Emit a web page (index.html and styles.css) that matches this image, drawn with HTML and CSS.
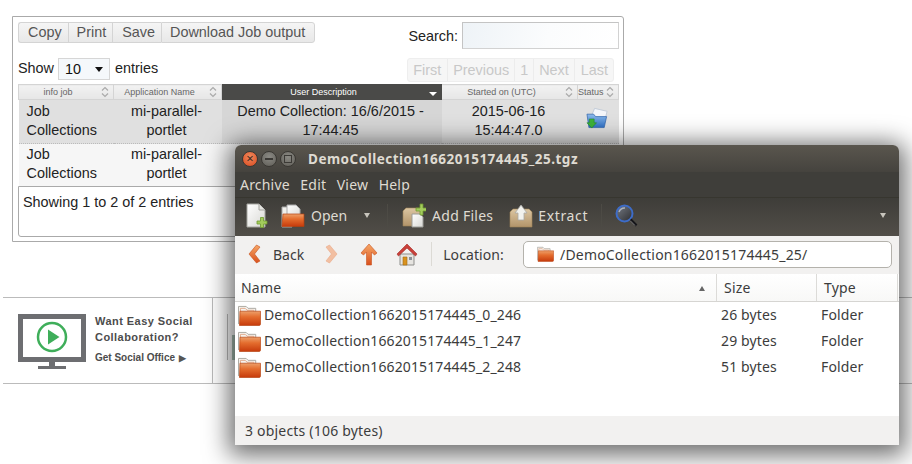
FILE: index.html
```html
<!DOCTYPE html>
<html lang="en">
<head>
<meta charset="utf-8">
<title>Job output</title>
<link rel="stylesheet" href="styles.css">
</head>
<body>
<svg class="defs" width="0" height="0" aria-hidden="true">
  <defs>
    <linearGradient id="gOrange" x1="0" y1="0" x2="0" y2="1">
      <stop offset="0" stop-color="#eda06a"/><stop offset=".4" stop-color="#e46d2e"/><stop offset="1" stop-color="#c63a0b"/>
    </linearGradient>
    <linearGradient id="gBox" x1="0" y1="0" x2="0" y2="1">
      <stop offset="0" stop-color="#dcc6a2"/><stop offset="1" stop-color="#b2946a"/>
    </linearGradient>
    <linearGradient id="gPaper" x1="0" y1="0" x2="1" y2="1">
      <stop offset="0" stop-color="#ffffff"/><stop offset="1" stop-color="#d8d8d4"/>
    </linearGradient>
    <linearGradient id="gBlue" x1="0" y1="0" x2="0" y2="1">
      <stop offset="0" stop-color="#8dbcec"/><stop offset="1" stop-color="#2f6fc4"/>
    </linearGradient>
    <linearGradient id="gArrow" x1="0" y1="0" x2="0" y2="1">
      <stop offset="0" stop-color="#f6a868"/><stop offset="1" stop-color="#d9501c"/>
    </linearGradient>
    <linearGradient id="gGlass" x1="0" y1="0" x2="1" y2="1">
      <stop offset="0" stop-color="#767b84"/><stop offset="1" stop-color="#2b2c30"/>
    </linearGradient>
    <symbol id="folder" viewBox="0 0 24 22">
      <path d="M.5 20V1.500h8l2 2h8V8" fill="#f6f4f0" stroke="#aaa7a0"/>
      <path d="M2.500 20V3.500h5l2 2h7V8" fill="none" stroke="#e2a888"/>
      <path d="M2 6.500h21.500V20a1.500 1.500 0 0 1-1.500 1.500H1.500z" fill="url(#gOrange)" stroke="#b5400f" stroke-width=".7"/>
    </symbol>
  </defs>
</svg>
<div class="page">
  <section class="panel">
    <div class="top-row">
      <div class="btn-group">
        <button class="btn">Copy</button><button class="btn">Print</button><button class="btn btn-save">Save</button><button class="btn">Download Job output</button>
      </div>
      <label class="search">Search:<span class="search-input"></span></label>
    </div>
    <div class="second-row">
      <div class="length">Show <span class="select">10<i class="select-arrow"></i></span> entries</div>
      <div class="pager">
        <span class="pg pg-first">First</span><span class="pg pg-prev">Previous</span><span class="pg pg-num">1</span><span class="pg pg-next">Next</span><span class="pg pg-last">Last</span>
      </div>
    </div>
    <table class="jobs">
      <colgroup>
        <col class="c1"><col class="c2"><col class="c3"><col class="c4"><col class="c5">
      </colgroup>
      <thead>
        <tr>
          <th><span class="th-in">info job<svg class="sort" viewBox="0 0 8 12"><path d="M1 4.500 4 1.500 7 4.500M1 7.500 4 10.500 7 7.500" fill="none" stroke="#aaa" stroke-width="1.200"/></svg></span></th>
          <th><span class="th-in">Application Name<svg class="sort" viewBox="0 0 8 12"><path d="M1 4.500 4 1.500 7 4.500M1 7.500 4 10.500 7 7.500" fill="none" stroke="#aaa" stroke-width="1.200"/></svg></span></th>
          <th class="sorted"><span class="th-in">User Description<svg class="sort" viewBox="0 0 8 12"><path d="M0 6h8L4 10z" fill="#fff"/></svg></span></th>
          <th><span class="th-in">Started on (UTC)<svg class="sort" viewBox="0 0 8 12"><path d="M1 4.500 4 1.500 7 4.500M1 7.500 4 10.500 7 7.500" fill="none" stroke="#aaa" stroke-width="1.200"/></svg></span></th>
          <th class="th-status"><span class="th-in">Status<svg class="sort" viewBox="0 0 8 12"><path d="M1 4.500 4 1.500 7 4.500M1 7.500 4 10.500 7 7.500" fill="none" stroke="#aaa" stroke-width="1.200"/></svg></span></th>
        </tr>
      </thead>
      <tbody>
        <tr class="row-a">
          <td class="left">Job Collections</td>
          <td>mi-parallel-portlet</td>
          <td class="col-sorted">Demo Collection: 16/6/2015 - 17:44:45</td>
          <td>2015-06-16 15:44:47.0</td>
          <td><svg class="status-icon" viewBox="1 0 24 22"><path d="M7 8 10 1l13 3-3 12z" fill="#f4f6fa" stroke="#b8c4d4" stroke-width=".8"/><path d="M2 7h7l2 2.500h11.500L20 21H4z" fill="url(#gBlue)" stroke="#2a5ea8" stroke-width=".7"/><path d="M4.500 12h5v4H12l-5 5.500L2 16h2.500z" fill="#3db23a" stroke="#1f8a2a" stroke-width=".6"/></svg></td>
        </tr>
        <tr class="row-b">
          <td class="left">Job Collections</td>
          <td>mi-parallel-portlet</td>
          <td></td>
          <td></td>
          <td></td>
        </tr>
      </tbody>
    </table>
    <div class="info">Showing 1 to 2 of 2 entries</div>
  </section>

  <aside class="promo">
    <div class="promo-main">
      <svg class="monitor" viewBox="0 0 68 55">
        <rect x="2.500" y="2.500" width="63" height="43" fill="#fff" stroke="#6d6e71" stroke-width="5"/>
        <rect x="0" y="43" width="68" height="4" fill="#6d6e71"/>
        <rect x="31" y="47" width="6" height="6" fill="#6d6e71"/>
        <rect x="20" y="52" width="28" height="3" fill="#6d6e71"/>
        <circle cx="34" cy="23" r="14" fill="none" stroke="#3fae5a" stroke-width="2.500"/>
        <path d="M30 15.500 41.500 23 30 30.500z" fill="#3fae5a"/>
      </svg>
      <div class="promo-text">
        <p class="promo-title">Want Easy Social<br>Collaboration?</p>
        <p class="promo-link">Get Social Office <span class="promo-play">&#9654;</span></p>
      </div>
    </div>
    <div class="promo-side"><span class="promo-rule"></span><span class="promo-tick"></span></div>
  </aside>

  <div class="window">
    <header class="titlebar">
      <span class="wbtn wbtn-close">&#215;</span>
      <span class="wbtn wbtn-min"><i class="glyph-min"></i></span>
      <span class="wbtn wbtn-max"><i class="glyph-max"></i></span>
      <span class="wtitle">DemoCollection1662015174445_25.tgz</span>
    </header>
    <nav class="menubar"><span>Archive</span><span>Edit</span><span>View</span><span>Help</span></nav>
    <div class="toolbar">
      <svg class="ti ti-new" viewBox="0 0 22 26"><path d="M1 1h12l6 6v17H1z" fill="url(#gPaper)" stroke="#a5a5a0"/><path d="M13 1v6h6" fill="#e4e4e0" stroke="#a5a5a0"/><path d="M11 18h3.500v-3.500h3V18H21v3h-3.500v3.500h-3V21H11z" fill="#a3cc5c" stroke="#6e9a30" stroke-width=".8"/></svg>
      <svg class="ti ti-open" viewBox="0 0 24 24"><path d="M1 3h10v20H1z" fill="#f1f0ec" stroke="#aaa"/><path d="M6 1h9l4 4v10H6z" fill="url(#gPaper)" stroke="#aaa"/><path d="M2 10h21v12.500H1z" fill="url(#gOrange)" stroke="#b5400f" stroke-width=".7"/></svg>
      <span class="tl tl-open">Open</span>
      <i class="tri tri-open"></i>
      <i class="tsep tsep-a"></i>
      <svg class="ti ti-add" viewBox="0 0 24 25"><path d="M1 8 4 5h14l2 3v15H1z" fill="url(#gBox)" stroke="#a08458" stroke-width=".6"/><path d="M10 11h8l3 3v10H10z" fill="url(#gPaper)" stroke="#9c9c98"/><path d="M14 5h4V1h3v4h3.500v3H21v4h-3V8h-4z" fill="#a3cc5c" stroke="#6e9a30" stroke-width=".8"/></svg>
      <span class="tl tl-add">Add Files</span>
      <svg class="ti ti-ext" viewBox="0 0 24 24"><path d="M1 8 4 5h16l3 3v15H1z" fill="url(#gBox)" stroke="#a08458" stroke-width=".6"/><path d="M9 16V9H6l6-8 6 8h-3v7z" fill="#f2f2ee" stroke="#a8a8a4" stroke-width=".8"/></svg>
      <span class="tl tl-ext">Extract</span>
      <i class="tsep tsep-b"></i>
      <svg class="ti ti-find" viewBox="0 0 23 23"><circle cx="9.500" cy="9.500" r="8" fill="url(#gGlass)" stroke="#3d6cc8" stroke-width="2"/><path d="M4 8a6 6 0 0 1 6-4" fill="none" stroke="#aab2c0" stroke-width="1.500"/><path d="m15.500 15.500 6 6" stroke="#16161a" stroke-width="2.500"/><path d="m15 16.500 5 5" stroke="#bdbdbd" stroke-width=".6"/></svg>
      <i class="tri tri-more"></i>
    </div>
    <div class="navbar">
      <svg class="ni ni-back" viewBox="0 0 14 20"><path d="M9.500 1 2 10l7.500 9 3.500-2-5.500-7L13 3z" fill="url(#gArrow)" stroke="#c8521e" stroke-width=".6"/></svg>
      <span class="nl nl-back">Back</span>
      <svg class="ni ni-fwd" viewBox="0 0 14 20"><path d="M4.500 1 12 10l-7.500 9L1 17l5.500-7L1 3z" fill="#f2bfa2" stroke="#eaa988" stroke-width=".6"/></svg>
      <svg class="ni ni-up" viewBox="0 0 18 23"><path d="M9 1 1 10l2.500 2L6.500 9v13h5V9l3 3 2.500-2z" fill="url(#gArrow)" stroke="#c8521e" stroke-width=".6"/></svg>
      <svg class="ni ni-home" viewBox="0 0 22 23"><path d="M4 11h14v11H4z" fill="#e6e4e0" stroke="#8f8f8c"/><path d="M7 14h4v8H7z" fill="#d9921e" stroke="#a56c10" stroke-width=".6"/><path d="M13 14h3v3h-3z" fill="#8a9097"/><path d="M11 1 1 11l1.500 2L11 5l8.500 8 1.500-2z" fill="#c9403a" stroke="#a32a26" stroke-width=".6"/></svg>
      <i class="nsep"></i>
      <span class="nl nl-loc">Location:</span>
      <div class="locfield">
        <svg class="loc-folder"><use href="#folder"/></svg>
        <span class="loc-text">/DemoCollection1662015174445_25/</span>
      </div>
    </div>
    <div class="list-head">
      <span class="lh lh-name">Name<i class="sort-up"></i></span>
      <span class="lh lh-size">Size</span>
      <span class="lh lh-type">Type</span>
    </div>
    <div class="list">
      <div class="item"><span class="item-name"><svg class="item-folder"><use href="#folder"/></svg>DemoCollection1662015174445_0_246</span><span class="item-size">26 bytes</span><span class="item-type">Folder</span></div>
      <div class="item"><span class="item-name"><svg class="item-folder"><use href="#folder"/></svg>DemoCollection1662015174445_1_247</span><span class="item-size">29 bytes</span><span class="item-type">Folder</span></div>
      <div class="item"><span class="item-name"><svg class="item-folder"><use href="#folder"/></svg>DemoCollection1662015174445_2_248</span><span class="item-size">51 bytes</span><span class="item-type">Folder</span></div>
    </div>
    <footer class="status">3 objects (106 bytes)</footer>
  </div>
</div>
</body>
</html>
```

FILE: styles.css
```css
* { box-sizing: border-box; }
html, body { margin: 0; padding: 0; background: #fff; }
.defs { position: absolute; }
.page {
  position: relative;
  width: 912px;
  height: 464px;
  overflow: hidden;
  padding-top: 16px;
  font-family: "Liberation Sans", Arial, sans-serif;
  font-size: 14.4px;
  color: #222;
}

/* page panel */
.panel {
  width: 612px;
  height: 226px;
  margin-left: 12px;
  padding: 5px;
  border: 1px solid #aaa;
  border-top-right-radius: 3px;
}
.top-row, .second-row { display: flex; justify-content: space-between; }
.top-row { height: 27px; }
.second-row { margin-top: 9px; height: 24px; }

.btn-group { display: flex; height: 21px; }
.btn {
  height: 21px;
  padding: 0 6px 0 8px;
  font: 14.4px/19px "Liberation Sans", Arial, sans-serif;
  color: #555;
  background: linear-gradient(#f5f5f5, #e8e8e8);
  border: 1px solid #d4d4d4;
  border-right-width: 0;
}
.btn:first-child { padding-left: 9px; border-radius: 3px 0 0 3px; }
.btn:last-child { padding-right: 9px; border-right-width: 1px; border-radius: 0 3px 3px 0; }
.btn-save { padding-left: 9px; }

.search { display: flex; align-items: center; gap: 4px; height: 27px; margin-right: -1px; color: #222; }
.search-input {
  width: 157px;
  height: 27px;
  border: 1px solid #d2d2d2;
  border-top-color: #c4c4c4;
  border-left-color: #c4c4c4;
  background: linear-gradient(100deg, #eef3f7, #fbfcfd 55%, #fff);
}

.length { display: flex; align-items: flex-start; gap: 4px; height: 22px; line-height: 20px; }
.select {
  position: relative;
  display: block;
  width: 52px;
  height: 22px;
  margin-right: 1px;
  padding-left: 6px;
  line-height: 21px;
  border: 1px solid #d6d6d6;
  background: #f5f8fb;
  color: #111;
}
.select-arrow {
  position: absolute;
  right: 6px;
  top: 8px;
  border: 4px solid transparent;
  border-top: 5px solid #111;
  border-bottom: 0;
}
.pager {
  display: flex;
  height: 24px;
  margin-right: 4px;
  border: 1px solid #eee;
  border-radius: 3px;
  background: #f6f6f6;
  color: #c8c8c8;
  line-height: 22px;
}
.pg { padding: 0 5px; border-left: 1px solid #ececec; }
.pg-first { padding-right: 6px; border-left: 0; }
.pg-last { padding-left: 6px; }

/* table */
.jobs { width: 600px; margin-top: 2px; border-collapse: collapse; table-layout: fixed; }
.c1 { width: 95px; }
.c2 { width: 108px; }
.c3 { width: 220px; }
.c4 { width: 136px; }
.c5 { width: 41px; }
.jobs th {
  position: relative;
  height: 15px;
  padding: 0 16px 0 0;
  font-weight: normal;
  font-size: 9px;
  line-height: 13px;
  color: #666;
  background: linear-gradient(#f2f2f2, #e6e6e6);
  border: 1px solid #d4d4d4;
  border-width: 1px 1px 1px 0;
}
.jobs th:first-child { border-left: 1px solid #d4d4d4; }
.th-in { display: block; }
.jobs th.sorted { background: #4a4a48; color: #fff; border-color: #4a4a48; }
.sort { position: absolute; right: 4px; top: 1px; width: 8px; height: 12px; }
.jobs th.th-status { text-align: left; padding: 0; }
.jobs td {
  padding: 0 2px 2px 0;
  text-align: center;
  vertical-align: middle;
  font-size: 14.4px;
  line-height: 19px;
  color: #222;
}
.jobs td.left { text-align: left; padding: 0 8px 2px; }
.row-a td { height: 44px; background: #e0e0e0; }
.row-a td.col-sorted { background: #d6d6d6; }
.row-b td { height: 42px; background: #f6f6f6; border-top: 1px dotted #bbb; }
.status-icon { display: block; width: 23px; height: 22px; margin: -6px auto 0; }

.info {
  width: 600px;
  height: 51px;
  padding: 6px 4px;
  border: 1px solid #aaa;
  border-bottom-left-radius: 3px;
  border-bottom-right-radius: 3px;
  line-height: 18px;
}

/* promo strip */
.promo {
  display: flex;
  width: 909px;
  height: 87px;
  margin: 55px 0 0 3px;
  border-top: 1px solid #bbb;
  border-bottom: 1px solid #bbb;
}
.promo-main {
  display: flex;
  width: 210px;
  padding: 16px 0 0 15px;
  border-right: 1px solid #bbb;
  gap: 9px;
}
.monitor { display: block; width: 68px; height: 55px; flex: none; }
.promo-text { margin-top: -1px; font-weight: bold; color: #4c4c4c; font-size: 11px; letter-spacing: .45px; }
.promo-title { margin: 0; line-height: 16px; }
.promo-link { margin: 6px 0 0; line-height: 14px; font-size: 10px; letter-spacing: 0; white-space: nowrap; }
.promo-play { margin-left: 1px; font-size: 9px; color: #555; }
.promo-side { position: relative; display: flex; padding: 16px 0 0 14px; gap: 4px; }
.promo-rule { display: block; width: 1px; height: 46px; background: #bbb; }
.promo-tick { display: block; width: 3px; height: 25px; margin-top: 21px; background: #a9c0b4; }

/* floating window */
.window {
  position: absolute;
  left: 235px;
  top: 145px;
  width: 664px;
  height: 300px;
  display: flex;
  flex-direction: column;
  border-radius: 6px 6px 0 0;
  box-shadow: 0 4px 24px 6px rgba(0, 0, 0, .58);
  font-family: "Noto Sans", sans-serif;
  font-size: 14px;
  color: #3c3c3c;
  background: #f2f1f0;
}
.titlebar {
  display: flex;
  align-items: center;
  height: 27px;
  flex: none;
  padding-left: 7px;
  gap: 3px;
  background: linear-gradient(#5a564e, #45433e);
  border-radius: 6px 6px 0 0;
}
.wbtn {
  display: flex;
  align-items: center;
  justify-content: center;
  width: 16px;
  height: 16px;
  border-radius: 50%;
  background: radial-gradient(circle at 50% 35%, #8b8a84, #5f5d57);
  border: 1px solid #3a3833;
  color: #3a2a20;
}
.wbtn-close { background: radial-gradient(circle at 50% 35%, #f08a5d, #d8491f); font-size: 13px; line-height: 1; }
.glyph-min { display: block; width: 8px; height: 2px; background: #3c3a36; }
.glyph-max { display: block; width: 8px; height: 8px; border: 1px solid #3c3a36; }
.wtitle {
  margin-left: 9px;
  font-weight: bold;
  font-size: 13.5px;
  letter-spacing: .5px;
  color: #dfdbd2;
  white-space: nowrap;
}
.menubar {
  display: flex;
  align-items: center;
  height: 25px;
  flex: none;
  padding-left: 5px;
  gap: 10.500px;
  letter-spacing: .2px;
  color: #dfdbd2;
  background: #3f3e3a;
}
.toolbar {
  display: flex;
  align-items: center;
  height: 39px;
  flex: none;
  padding: 0 0 3px 11px;
  color: #dfdbd2;
  background: linear-gradient(#3e3d39, #514e48);
  border-top: 1px solid #37362f;
}
.ti { display: block; flex: none; }
.ti-new { width: 22px; height: 26px; }
.ti-open { width: 24px; height: 24px; margin-left: 13px; }
.tl { white-space: nowrap; }
.tl-open { margin-left: 6px; }
.tri { display: block; border: 3.500px solid transparent; border-top: 5px solid #c8c5bd; border-bottom: 0; }
.tri-open { margin-left: 17px; }
.tsep { display: block; width: 1px; height: 24px; background: #4d4b45; }
.tsep-a { margin-left: 17px; }
.ti-add { width: 24px; height: 25px; margin-left: 14px; }
.tl-add { margin-left: 6px; letter-spacing: .25px; }
.ti-ext { width: 24px; height: 24px; margin-left: 16px; }
.tl-ext { margin-left: 5px; letter-spacing: .65px; }
.tsep-b { margin-left: 13px; }
.ti-find { width: 23px; height: 23px; margin-left: 13px; }
.tri-more { margin-left: auto; margin-right: 13px; }
.navbar {
  display: flex;
  align-items: center;
  height: 38px;
  flex: none;
  padding: 0 0 2px 12px;
  background: #f2f1f0;
}
.ni { display: block; flex: none; }
.ni-back { width: 14px; height: 20px; }
.nl { color: #3c3c3c; white-space: nowrap; }
.nl-back { margin-left: 12px; }
.ni-fwd { width: 14px; height: 20px; margin-left: 21px; }
.ni-up { width: 18px; height: 23px; margin-left: 21px; }
.ni-home { width: 22px; height: 23px; margin-left: 18px; }
.nsep { display: block; width: 1px; height: 24px; margin-left: 13px; background: #dcdad5; }
.nl-loc { margin-left: 11px; letter-spacing: .1px; }
.locfield {
  display: flex;
  align-items: center;
  width: 369px;
  height: 27px;
  margin-left: 19px;
  padding-left: 13px;
  gap: 6px;
  background: #fff;
  border: 1px solid #b4b2ac;
  border-radius: 5px;
  white-space: nowrap;
  letter-spacing: .19px;
}
.loc-folder { display: block; width: 17px; height: 16px; flex: none; }
.list-head {
  display: grid;
  grid-template-columns: 482px 100px 81px;
  height: 28px;
  flex: none;
  letter-spacing: .2px;
  background: linear-gradient(#fff, #f8f8f7);
  border-bottom: 1px solid #d6d5d2;
}
.lh { position: relative; display: flex; align-items: center; padding-left: 7px; border-right: 1px solid #dcdbd8; }
.lh-name { padding-left: 6px; }
.sort-up {
  position: absolute;
  right: 11px;
  top: 12px;
  border: 3.500px solid transparent;
  border-bottom: 5px solid #666;
  border-top: 0;
}
.list { flex: 1; background: #fff; }
.item { display: grid; grid-template-columns: 482px 100px 82px; height: 26px; padding-bottom: 2px; align-items: center; letter-spacing: .12px; }
.item-name { display: flex; align-items: center; padding-left: 3px; gap: 3px; white-space: nowrap; }
.item-folder { display: block; width: 23px; height: 21px; flex: none; margin-top: 2px; }
.item-size, .item-type { padding-left: 4px; }
.status { height: 29px; flex: none; padding-left: 10px; line-height: 29px; letter-spacing: .2px; background: #f2f1f0; }
```
